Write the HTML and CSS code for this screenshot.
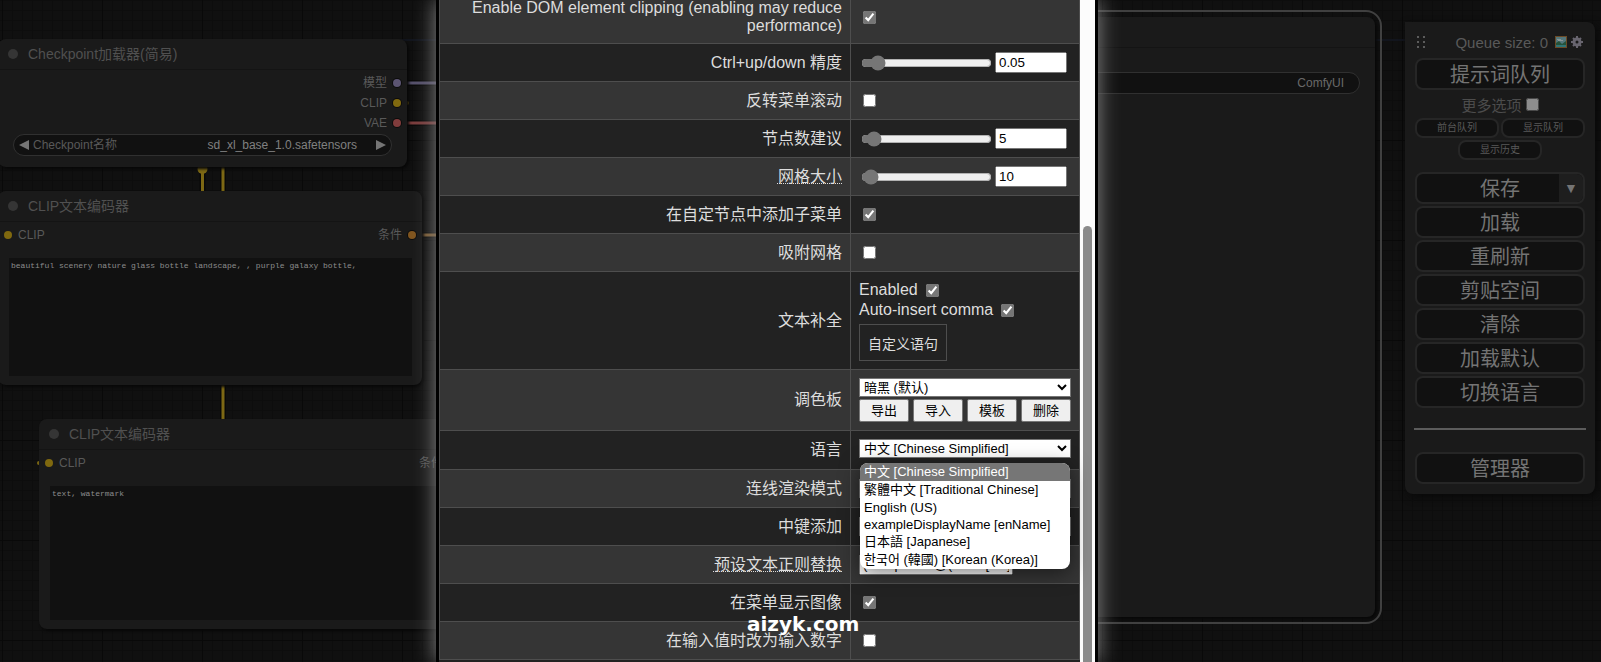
FILE: index.html
```html
<!DOCTYPE html>
<html lang="zh-CN">
<head>
    <meta charset="UTF-8">
    <meta name="viewport" content="width=device-width, initial-scale=1.0">
    <title>ComfyUI</title>
    <link rel="stylesheet" href="styles.css">
</head>
<body>
    <main class="canvas">
        <svg class="links" width="100%" height="100%">
            <g class="link-shadow">
                <path d="M400 83H440M400 123H440M415 235H440M202.500 168V195M223 160V425"/>
            </g>
            <path class="link blue" d="M400 40H440M1374 40H1410"/>
            <path class="link model" d="M400 83H440"/>
            <path class="link vae" d="M400 123H440"/>
            <path class="link cond" d="M415 235H440"/>
            <path class="link clip" d="M202.500 168V195M223 160V425"/>
            <circle class="clip-dot" cx="202.500" cy="169" r="5"/>
            <circle class="clip-dot" cx="407" cy="103" r="2"/>
            <circle class="clip-dot" cx="39" cy="463" r="2"/>
        </svg>

        <section class="node node-loader">
            <h2 class="node-title">Checkpoint加载器(简易)</h2>
            <ul class="slots">
                <li class="slot out">模型<i class="dot model"></i></li>
                <li class="slot out">CLIP<i class="dot clip"></i></li>
                <li class="slot out">VAE<i class="dot vae"></i></li>
            </ul>
            <div class="widget">
                <svg width="10" height="10" viewBox="0 0 10 10"><path d="M10 0v10L0 5z"/></svg>
                <span class="widget-name">Checkpoint名称</span>
                <span class="widget-value">sd_xl_base_1.0.safetensors</span>
                <svg width="10" height="10" viewBox="0 0 10 10"><path d="M0 0v10l10-5z"/></svg>
            </div>
        </section>

        <section class="node node-positive">
            <h2 class="node-title">CLIP文本编码器</h2>
            <div class="slot both"><i class="dot in"></i>CLIP<span class="cond-label">条件</span><i class="dot cond"></i></div>
            <textarea class="prompt" aria-label="Positive prompt" spellcheck="false">beautiful scenery nature glass bottle landscape, , purple galaxy bottle,</textarea>
        </section>

        <section class="node node-negative">
            <h2 class="node-title">CLIP文本编码器</h2>
            <div class="slot both"><i class="dot in"></i>CLIP<span class="cond-label">条件</span><i class="dot cond"></i></div>
            <textarea class="prompt" aria-label="Negative prompt" spellcheck="false">text, watermark</textarea>
        </section>

        <section class="selected-outline">
            <div class="node-save">
                <div class="node-head"></div>
                <div class="widget"><span class="widget-value">ComfyUI</span></div>
            </div>
        </section>
    </main>

    <aside class="menu">
        <div class="menu-head">
            <svg class="drag" width="8" height="12" viewBox="0 0 8 12"><path d="M0 0h2v2H0zM6 0h2v2H6zM0 5h2v2H0zM6 5h2v2H6zM0 10h2v2H0zM6 10h2v2H6z"/></svg>
            <span class="queue-size">Queue size: 0</span>
            <button class="icon-btn" aria-label="Images">
                <svg width="12" height="12" viewBox="0 0 12 12">
                    <path fill="#6b4a26" d="M0 0h12v12H0z"/>
                    <path fill="#53777c" d="M1 1h10v10H1z"/>
                    <path fill="#8a9494" d="M2 3h4v1h2v1H3V4H2z"/>
                    <path fill="#24523a" d="M1 7l3-2 3 3 4-3v6H1z"/>
                    <path fill="#2f7476" d="M1 9h10v2H1z"/>
                </svg>
            </button>
            <button class="icon-btn" aria-label="Settings">
                <svg width="12" height="12" viewBox="0 0 12 12">
                    <g stroke="#68656f" stroke-width="2"><path d="M6 0v12M0 6h12M2 2l8 8M10 2l-8 8"/></g>
                    <circle cx="6" cy="6" r="3" fill="#1a1a1a" stroke="#68656f" stroke-width="3"/>
                </svg>
            </button>
        </div>
        <button class="menu-btn">提示词队列</button>
        <label class="extra">更多选项<input type="checkbox"></label>
        <div class="small-btns">
            <button class="small-btn">前台队列</button>
            <button class="small-btn">显示队列</button>
            <button class="small-btn">显示历史</button>
        </div>
        <div class="menu-list">
            <div class="save-row">
                <button class="menu-btn">保存</button>
                <button class="save-arrow" aria-label="Save options">▼</button>
            </div>
            <button class="menu-btn">加载</button>
            <button class="menu-btn">重刷新</button>
            <button class="menu-btn">剪贴空间</button>
            <button class="menu-btn">清除</button>
            <button class="menu-btn">加载默认</button>
            <button class="menu-btn">切换语言</button>
        </div>
        <hr>
        <button class="menu-btn">管理器</button>
    </aside>

    <div class="settings" role="dialog" aria-label="Settings">
        <table class="settings-table">
            <tr>
                <td class="name"><label for="clipping">Enable DOM element clipping (enabling may reduce performance)</label></td>
                <td><input type="checkbox" id="clipping" checked></td>
            </tr>
            <tr>
                <td class="name"><label for="precision">Ctrl+up/down 精度</label></td>
                <td>
                    <div class="range">
                        <input type="range" id="precision" min="0.01" max="0.5" step="0.01" value="0.05">
                        <input type="text" aria-label="Ctrl+up/down 精度" value="0.05">
                    </div>
                </td>
            </tr>
            <tr>
                <td class="name"><label for="invert">反转菜单滚动</label></td>
                <td><input type="checkbox" id="invert"></td>
            </tr>
            <tr>
                <td class="name"><label for="suggestions">节点数建议</label></td>
                <td>
                    <div class="range">
                        <input type="range" id="suggestions" min="0" max="100" value="4">
                        <input type="text" aria-label="节点数建议" value="5">
                    </div>
                </td>
            </tr>
            <tr>
                <td class="name"><label for="grid" class="hint">网格大小</label></td>
                <td>
                    <div class="range">
                        <input type="range" id="grid" min="1" max="500" value="10">
                        <input type="text" aria-label="网格大小" value="10">
                    </div>
                </td>
            </tr>
            <tr>
                <td class="name"><label for="submenu">在自定节点中添加子菜单</label></td>
                <td><input type="checkbox" id="submenu" checked></td>
            </tr>
            <tr>
                <td class="name"><label for="snap">吸附网格</label></td>
                <td><input type="checkbox" id="snap"></td>
            </tr>
            <tr>
                <td class="name">文本补全</td>
                <td class="complete">
                    <label>Enabled <input type="checkbox" checked></label>
                    <label>Auto-insert comma <input type="checkbox" checked></label>
                    <button class="words-btn">自定义语句</button>
                </td>
            </tr>
            <tr>
                <td class="name"><label for="palette">调色板</label></td>
                <td>
                    <select id="palette"><option>暗黑 (默认)</option></select>
                    <div class="palette-btns">
                        <button>导出</button>
                        <button>导入</button>
                        <button>模板</button>
                        <button>删除</button>
                    </div>
                </td>
            </tr>
            <tr class="language">
                <td class="name"><label for="language">语言</label></td>
                <td>
                    <div class="select-wrap">
                        <select id="language"><option>中文 [Chinese Simplified]</option></select>
                        <ul class="options">
                            <li class="active">中文 [Chinese Simplified]</li>
                            <li>繁體中文 [Traditional Chinese]</li>
                            <li class="latin">English (US)</li>
                            <li class="latin">exampleDisplayName [enName]</li>
                            <li>日本語 [Japanese]</li>
                            <li>한국어 (韓國) [Korean (Korea)]</li>
                        </ul>
                    </div>
                </td>
            </tr>
            <tr>
                <td class="name"><label for="render">连线渲染模式</label></td>
                <td><select id="render"><option>Spline</option></select></td>
            </tr>
            <tr>
                <td class="name"><label for="middle">中键添加</label></td>
                <td><select id="middle"><option>Reroute</option></select></td>
            </tr>
            <tr>
                <td class="name"><label for="regex" class="hint">预设文本正则替换</label></td>
                <td><input type="text" class="regex" id="regex" value="(?&lt;replace&gt;@(?&lt;id&gt;[\w-]+))"></td>
            </tr>
            <tr>
                <td class="name"><label for="images">在菜单显示图像</label></td>
                <td><input type="checkbox" id="images" checked></td>
            </tr>
            <tr>
                <td class="name"><label for="numbers">在输入值时改为输入数字</label></td>
                <td><input type="checkbox" id="numbers"></td>
            </tr>
        </table>
        <div class="scrollbar"><div class="thumb"></div></div>
        <div class="watermark">aizyk.com</div>
    </div>
</body>
</html>
```

FILE: styles.css
```css
* {
    box-sizing: border-box;
}
body {
    margin: 0;
    height: 100vh;
    overflow: hidden;
    position: relative;
    background-color: #101010;
    font-family: "Liberation Sans", Arial, "Noto Sans CJK SC", sans-serif;
}
button, input, select {
    font-family: inherit;
}
ul {
    list-style: none;
    margin: 0;
    padding: 0;
}

/* graph */
.canvas {
    position: absolute;
    inset: 0;
    background-image:
        linear-gradient(#090909 1px, transparent 1px),
        linear-gradient(90deg, #090909 1px, transparent 1px),
        linear-gradient(#0d0d0d 1px, transparent 1px),
        linear-gradient(90deg, #0d0d0d 1px, transparent 1px);
    background-size: 100px 100px, 100px 100px, 10px 10px, 10px 10px;
    background-position: 2px 40px;
}
.links {
    position: absolute;
    inset: 0;
}
.link-shadow {
    fill: none;
    stroke: #080808;
    stroke-width: 6;
}
.link {
    fill: none;
    stroke-width: 3;
}
.link.blue { stroke: #12151d; stroke-width: 2; }
.link.model { stroke: #55506b; }
.link.vae { stroke: #7a3c3c; }
.link.cond { stroke: #7d5c32; }
.link.clip { stroke: #7d6814; }
.clip-dot { fill: #7d6814; }

.node {
    position: absolute;
    display: flex;
    flex-direction: column;
    background-color: #1a1a1a;
    border-radius: 8px;
    box-shadow: 2px 2px 3px #080808;
    font-size: 12px;
    line-height: 14px;
    color: #595959;
}
.node-loader {
    left: -2px;
    top: 39px;
    width: 409px;
    height: 128px;
}
.node-positive {
    left: -2px;
    top: 191px;
    width: 424px;
    height: 194px;
}
.node-negative {
    left: 39px;
    top: 419px;
    width: 424px;
    height: 210px;
}
.node-title {
    display: flex;
    align-items: center;
    gap: 10px;
    height: 31px;
    margin: 0;
    padding-left: 10px;
    border-bottom: 1px solid #141414;
    font-size: 14px;
    font-weight: normal;
    line-height: 16px;
    color: #505050;
}
.node-title::before {
    content: "";
    width: 10px;
    height: 10px;
    border-radius: 5px;
    background-color: #353535;
}
.slots {
    padding-top: 3px;
}
.slot {
    display: flex;
    align-items: center;
    height: 20px;
    padding-right: 6px;
    gap: 6px;
}
.slot.out {
    justify-content: flex-end;
}
.slot.both {
    margin: 3px 0 13px;
    padding-left: 6px;
}
.cond-label {
    margin-left: auto;
}
.dot {
    width: 8px;
    height: 8px;
    border-radius: 4px;
    box-shadow: 0 0 0 1px #0c0c0c;
}
.dot.model { background-color: #5c5572; }
.dot.clip, .dot.in { background-color: #80690f; }
.dot.vae { background-color: #803c3c; }
.dot.cond { background-color: #80551f; }
.dot.in {
    box-shadow: none;
}
.widget {
    display: flex;
    align-items: center;
    gap: 4px;
    height: 22px;
    margin: 1px 15px;
    padding: 0 5px;
    border: 1px solid #303030;
    border-radius: 11px;
    background-color: #111;
    fill: #757575;
}
.widget-value {
    margin-left: auto;
    margin-right: 15px;
    color: #808080;
}
.prompt {
    flex: 1;
    margin: 0 10px 9px 11px;
    padding: 2px;
    border: 0;
    resize: none;
    background-color: #111;
    color: #8c8c8c;
    font-family: "Liberation Mono", monospace;
    font-size: 8px;
    line-height: 12px;
}
.selected-outline {
    position: absolute;
    left: 700px;
    right: 219px;
    top: 10px;
    bottom: 38px;
    padding: 5px;
    border: 2px solid #404040;
    border-radius: 16px;
}
.node-save {
    height: 100%;
    border-radius: 8px;
    background-color: #1a1a1a;
    box-shadow: 2px 2px 3px #080808;
    font-size: 12px;
}
.node-head {
    height: 31px;
    margin-bottom: 24px;
    border-bottom: 1px solid #141414;
}
.node-save .widget-value {
    margin-right: 10px;
    color: #696969;
}

/* side menu */
.menu {
    position: absolute;
    right: 6px;
    top: 22px;
    width: 190px;
    padding: 10px;
    border-radius: 0 8px 8px 8px;
    background-color: #1a1a1a;
    box-shadow: 3px 3px 8px #090909;
    display: flex;
    flex-direction: column;
    color: #595959;
}
.menu-head {
    display: flex;
    align-items: center;
    height: 20px;
    margin-bottom: 6px;
    padding: 0 2px;
    gap: 4px;
}
.drag {
    fill: #5c5c5c;
}
.queue-size {
    margin-left: auto;
    margin-right: 3px;
    font-size: 15px;
}
.icon-btn {
    display: flex;
    padding: 0;
    border: 0;
    background: none;
}
.menu-btn, .small-btn {
    border: 2px solid #262626;
    border-radius: 8px;
    background-color: #111;
    color: #747474;
}
.menu-btn {
    width: 100%;
    height: 32px;
    padding: 2px 0 0;
    font-size: 20px;
    line-height: 20px;
}
.extra {
    display: flex;
    align-items: center;
    justify-content: center;
    height: 28px;
    font-size: 15px;
    color: #4c4c4c;
}
.extra input {
    margin: 0 0 0 4px;
    opacity: 0.5;
}
.small-btns {
    display: flex;
    flex-wrap: wrap;
    justify-content: center;
    gap: 2px;
}
.small-btn {
    width: 84px;
    height: 20px;
    padding: 0;
    font-size: 10px;
    line-height: 14px;
    color: #595959;
}
.menu-list {
    display: flex;
    flex-direction: column;
    gap: 2px;
    margin-top: 12px;
}
.save-row {
    position: relative;
}
.save-row .menu-btn {
    display: block;
}
.save-arrow {
    position: absolute;
    right: 2px;
    top: 2px;
    bottom: 2px;
    width: 24px;
    padding: 0;
    border: 0;
    border-radius: 0 6px 6px 0;
    background-color: #1e1e1e;
    color: #747474;
    font-size: 14px;
}
.menu hr {
    width: 172px;
    height: 2px;
    margin: 20px -1px 22px;
    border: 0;
    background-color: #5c5c5c;
}

/* settings dialog */
.settings {
    position: absolute;
    left: 436px;
    right: 503px;
    top: 0;
    bottom: 0;
    display: flex;
    align-items: flex-start;
    border: solid #000;
    border-width: 0 3px;
    background-color: #222;
    box-shadow: 0 0 20px #888;
    color: #ddd;
}
.settings-table {
    flex: 1;
    margin-top: -10px;
    border-collapse: collapse;
    font-size: 16px;
    line-height: 18px;
}
.settings-table tr {
    height: 38px;
    background-color: #222;
}
.settings-table tr:nth-child(odd) {
    background-color: #353535;
}
.settings-table .language {
    height: 39px;
    vertical-align: top;
}
.settings-table td {
    width: 229px;
    padding: 8px;
    border: 1px solid #4e4e4e;
}
.settings-table .name {
    width: auto;
    text-align: right;
    vertical-align: middle;
}
.hint {
    text-decoration: underline dotted 1px;
}
.settings input {
    accent-color: #767676;
}
.settings input[type="checkbox"] {
    display: block;
}
.range {
    display: flex;
    align-items: center;
    gap: 1px;
}
.range input[type="range"] {
    width: 131px;
}
.range input[type="text"] {
    width: 72px;
    height: 21px;
}
.settings .complete label {
    display: flex;
    align-items: center;
    gap: 4px;
    height: 20px;
}
.words-btn {
    display: block;
    height: 37px;
    margin-top: 4px;
    padding: 8px;
    border: 1px solid #4e4e4e;
    background-color: #222;
    color: #ddd;
    font-size: 14px;
}
.settings select {
    display: block;
    width: 100%;
    height: 19px;
    padding: 0;
    border: 1px solid #767676;
    border-radius: 0;
    background-color: #fff;
    font-size: 13px;
}
.palette-btns {
    display: grid;
    grid-template-columns: repeat(4, 1fr);
    gap: 4px;
    margin-top: 2px;
}
.palette-btns button {
    height: 23px;
    padding: 0;
    border: 1px solid #767676;
    border-radius: 2px;
    background-color: #efefef;
    font-size: 13px;
    line-height: 18px;
}
.regex {
    display: block;
    width: 154px;
    height: 21px;
}
.select-wrap {
    position: relative;
}
.options {
    position: absolute;
    left: 1px;
    right: 1px;
    top: 24px;
    z-index: 1;
    overflow: hidden;
    border-radius: 8px;
    background-color: #fff;
    box-shadow: 0 4px 20px rgba(0, 0, 0, 0.5);
    color: #000;
    font-size: 13px;
}
.options li {
    height: 18px;
    padding-left: 4px;
    line-height: 18px;
}
.options .latin {
    height: 17px;
    line-height: 17px;
}
.options .active {
    background-color: #767676;
    color: #fff;
}
.scrollbar {
    width: 15px;
    height: 100%;
    padding: 226px 3px 0;
    background-color: #fcfcfc;
}
.thumb {
    height: 100%;
    border-radius: 5px 5px 0 0;
    background-color: #8b8b8b;
}
.watermark {
    position: absolute;
    left: 308px;
    bottom: 26px;
    color: #fff;
    font: bold 20px/24px "DejaVu Sans", sans-serif;
}
```
